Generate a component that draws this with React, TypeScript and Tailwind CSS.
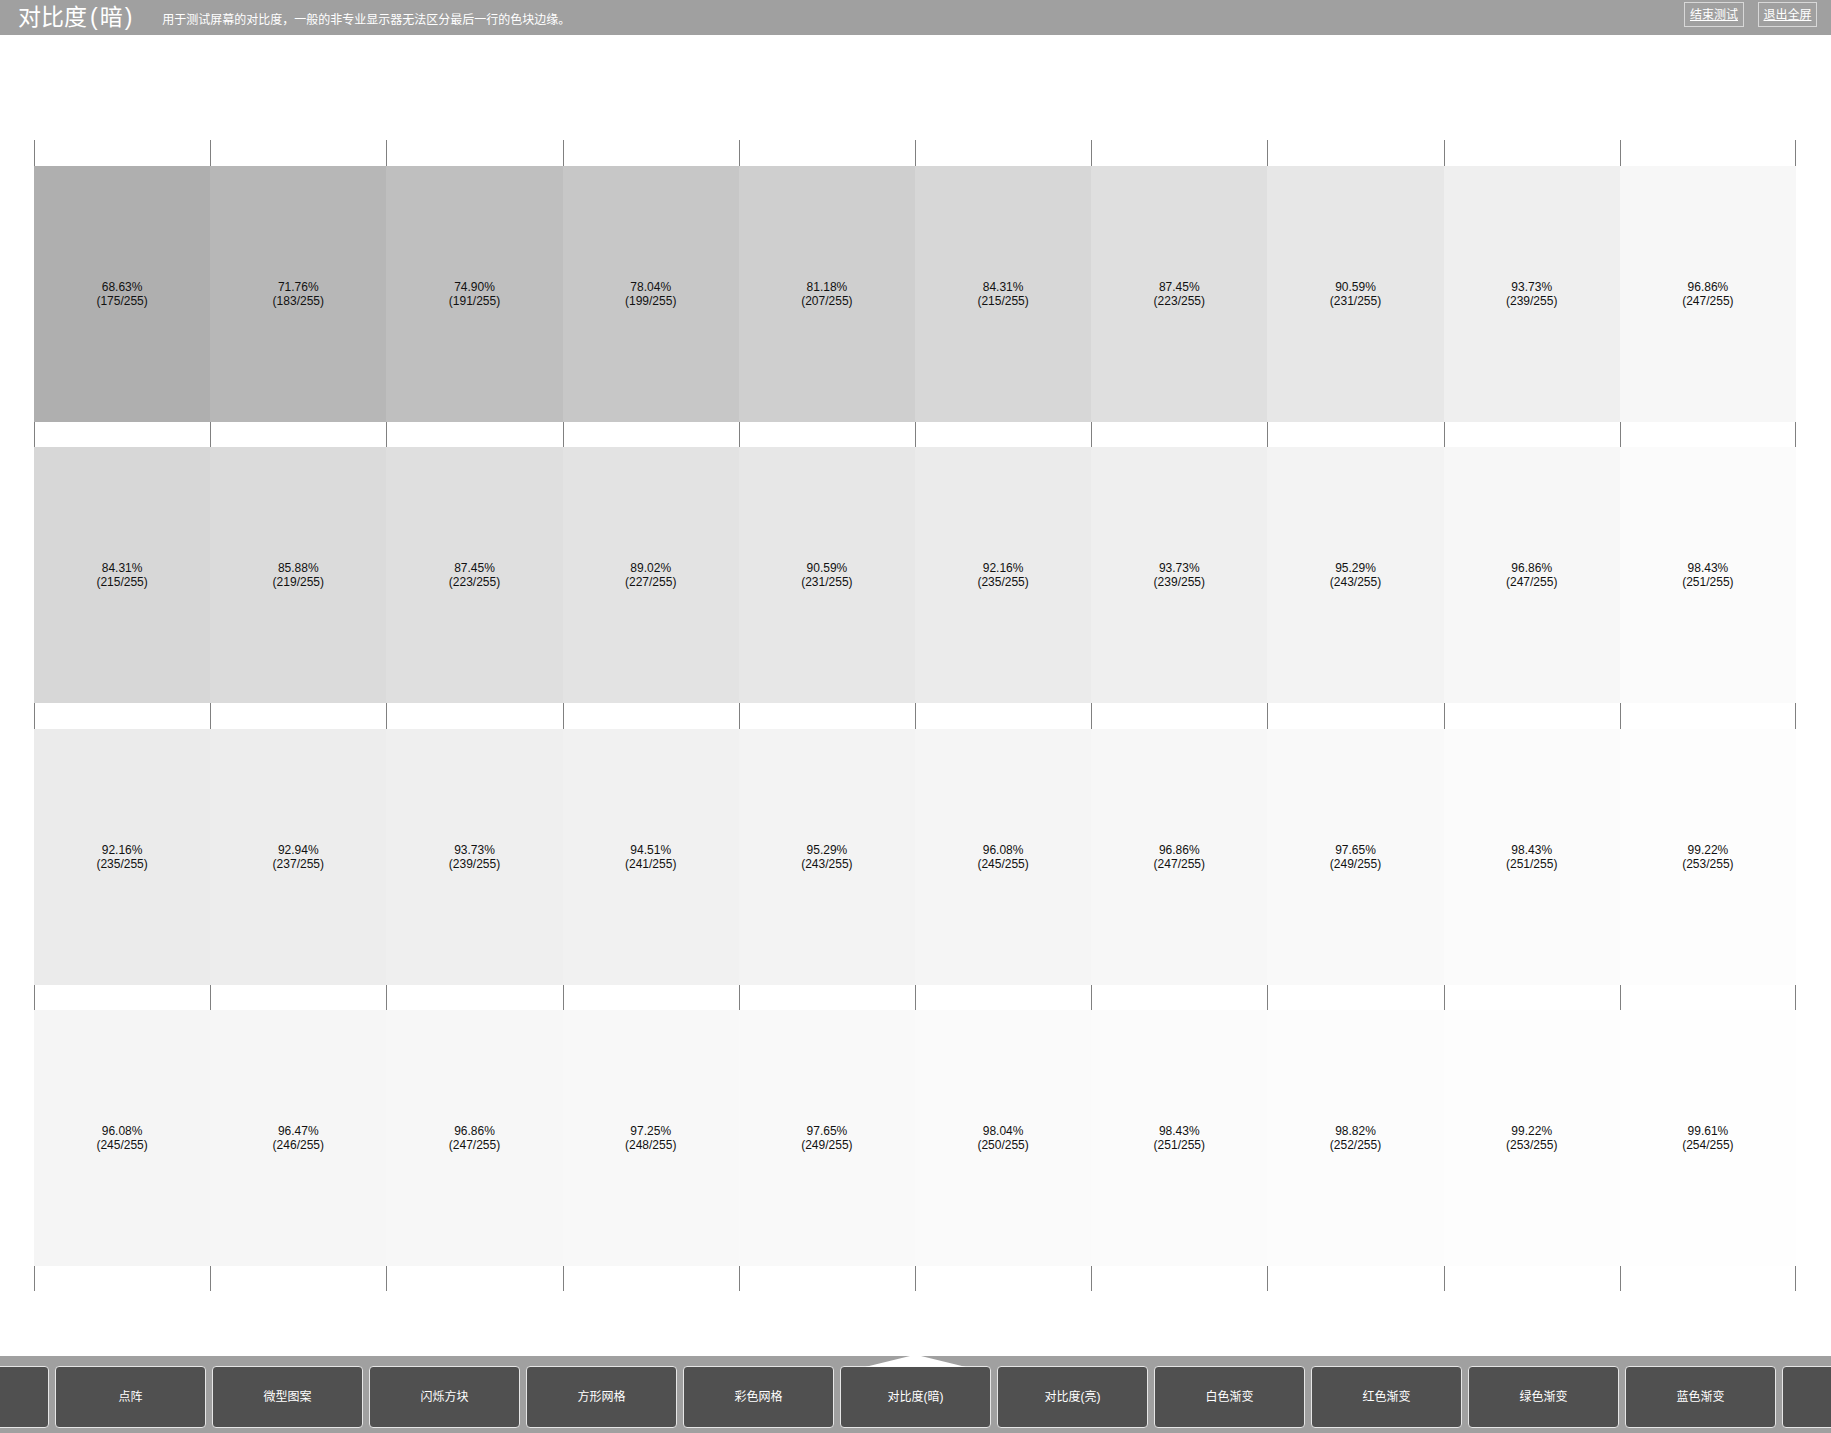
import React from "react";

const rows: number[][] = [
  [175, 183, 191, 199, 207, 215, 223, 231, 239, 247],
  [215, 219, 223, 227, 231, 235, 239, 243, 247, 251],
  [235, 237, 239, 241, 243, 245, 247, 249, 251, 253],
  [245, 246, 247, 248, 249, 250, 251, 252, 253, 254],
];

const tickHeights = ["h-[26px]", "h-[25px]", "h-[26px]", "h-[25px]", "h-[25px]"];

const navItems = [
  "",
  "点阵",
  "微型图案",
  "闪烁方块",
  "方形网格",
  "彩色网格",
  "对比度(暗)",
  "对比度(亮)",
  "白色渐变",
  "红色渐变",
  "绿色渐变",
  "蓝色渐变",
  "",
];

function TickRow({ h }: { h: string }) {
  return (
    <div className={`grid grid-cols-10 ${h}`}>
      {Array.from({ length: 10 }).map((_, i) => (
        <div
          key={i}
          className={`border-l border-[#808080] ${i === 9 ? "border-r" : ""}`}
        />
      ))}
    </div>
  );
}

function BlockRow({ values }: { values: number[] }) {
  return (
    <div className="grid grid-cols-10 h-[256px]">
      {values.map((v, i) => (
        <div
          key={i}
          className="flex flex-col items-center justify-center text-[12px] leading-[14px] text-[#111]"
          style={{ backgroundColor: `rgb(${v},${v},${v})` }}
        >
          <span>{((v / 255) * 100).toFixed(2)}%</span>
          <span>({v}/255)</span>
        </div>
      ))}
    </div>
  );
}

export default function App() {
  return (
    <div
      className="w-[1831px] h-[1433px] bg-white flex flex-col overflow-hidden"
      style={{ fontFamily: '"Liberation Sans", "Noto Sans CJK SC", sans-serif' }}
    >
      {/* Header */}
      <div className="h-[35px] bg-[#a0a0a0] flex items-center pl-[18px] text-white shrink-0">
        <div className="text-[23px] leading-none flex items-center">
          <span>对比度</span>
          <span className="ml-[3px] mr-[2px]">(</span>
          <span>暗</span>
          <span className="ml-[2px]">)</span>
        </div>
        <div className="text-[12px] leading-none ml-[30px] mt-[5px]">
          用于测试屏幕的对比度，一般的非专业显示器无法区分最后一行的色块边缘。
        </div>
        <div className="ml-auto mr-[14px] self-start mt-[2px] flex gap-[14px]">
          <div className="w-[60px] h-[25px] border border-[#d8d8d8] flex items-center justify-center text-[12px] underline">
            结束测试
          </div>
          <div className="w-[59px] h-[25px] border border-[#d8d8d8] flex items-center justify-center text-[12px] underline">
            退出全屏
          </div>
        </div>
      </div>

      {/* Grid */}
      <div className="mt-[105px] ml-[34px] w-[1762px] flex flex-col">
        <TickRow h={tickHeights[0]} />
        {rows.map((r, i) => (
          <React.Fragment key={i}>
            <BlockRow values={r} />
            <TickRow h={tickHeights[i + 1]} />
          </React.Fragment>
        ))}
      </div>

      <div className="flex-1" />

      {/* Nav bar */}
      <div className="relative h-[77px] bg-[#a0a0a0] pt-[10px] shrink-0 overflow-hidden">
        <svg
          className="absolute left-[865px] top-0"
          width="101"
          height="11"
          viewBox="0 0 101 11"
        >
          <polygon points="0,11 45,0 56,0 101,11" fill="#ffffff" />
        </svg>
        <div className="flex gap-[6px] ml-[-102px]">
          {navItems.map((t, i) => (
            <div
              key={i}
              className="shrink-0 w-[151px] h-[62px] bg-[#505050] border border-[#e6e6e6] rounded-[4px] flex items-center justify-center text-white text-[12px]"
            >
              {t}
            </div>
          ))}
        </div>
      </div>
    </div>
  );
}
